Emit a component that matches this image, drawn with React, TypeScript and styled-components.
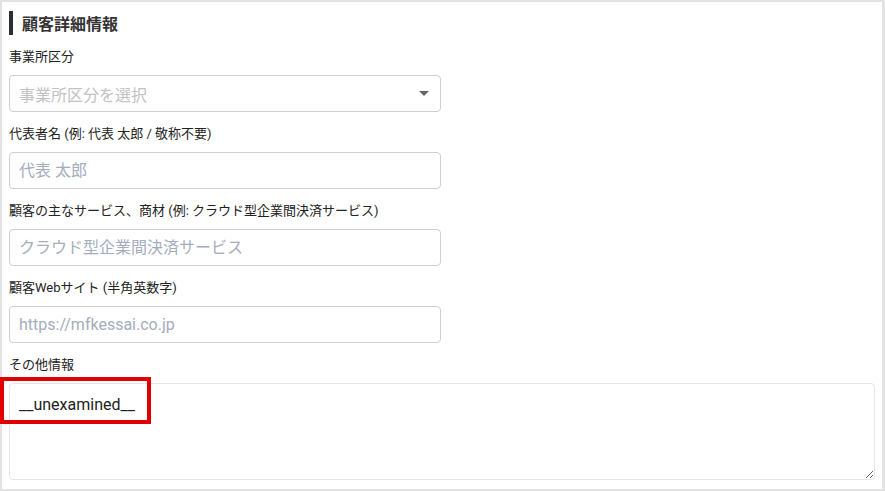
import React from 'react';
import styled, { createGlobalStyle } from 'styled-components';

const GlobalStyle = createGlobalStyle`
  html, body {
    margin: 0;
    padding: 0;
    background: #ffffff;
  }
  * {
    box-sizing: border-box;
  }
`;

const Card = styled.section`
  width: 885px;
  height: 491px;
  border: 2px solid #e3e3e3;
  border-right-width: 3px;
  background: #ffffff;
  padding: 9px 7px 9px 7px;
  display: flex;
  flex-direction: column;
  font-family: Roboto, 'Noto Sans CJK JP', sans-serif;
  color: #222;
`;

const Title = styled.h2`
  margin: 0 0 13px;
  height: 24px;
  display: flex;
  align-items: center;
  gap: 9px;
  font-size: 16px;
  font-weight: 700;
  color: #333;
  &::before {
    content: '';
    display: block;
    width: 4px;
    height: 24px;
    background: #2b3036;
  }
`;

const Field = styled.div`
  display: flex;
  flex-direction: column;
  margin-bottom: 13px;
  &:last-child {
    margin-bottom: 0;
    flex: 1;
  }
`;

const Label = styled.label`
  font-size: 13px;
  line-height: 18px;
  height: 18px;
  margin-bottom: 9px;
  color: #222;
`;

const TextInput = styled.input`
  width: 432px;
  height: 37px;
  border: 1px solid #cfcfcf;
  border-radius: 4px;
  padding: 0 9px;
  font-family: Roboto, 'Noto Sans CJK JP', sans-serif;
  font-size: 16px;
  color: #222;
  outline: none;
  &::placeholder {
    color: #a3adbd;
  }
`;

const SelectBox = styled.div`
  position: relative;
  width: 432px;
  height: 37px;
  border: 1px solid #cfcfcf;
  border-radius: 4px;
  padding: 0 9px;
  display: flex;
  align-items: center;
  justify-content: space-between;
  font-size: 16px;
  color: #c2c2c2;
`;

const Caret = styled.span`
  width: 0;
  height: 0;
  margin-right: 2px;
  border-left: 5px solid transparent;
  border-right: 5px solid transparent;
  border-top: 5px solid #666;
`;

const NoteWrap = styled.div`
  position: relative;
  flex: 1;
  display: flex;
`;

const TextArea = styled.textarea`
  flex: 1;
  width: 100%;
  border: 1px solid #e6e6e6;
  border-radius: 4px;
  padding: 10px 9px;
  font-family: Roboto, 'Noto Sans CJK JP', sans-serif;
  font-size: 16px;
  line-height: 22px;
  color: #222;
  outline: none;
  resize: vertical;
`;

const Highlight = styled.div`
  position: absolute;
  left: -9px;
  top: -6px;
  width: 151px;
  height: 47px;
  border: 4px solid #e00000;
  pointer-events: none;
`;

export default function App() {
  return (
    <>
      <GlobalStyle />
      <Card>
        <Title>顧客詳細情報</Title>
        <Field>
          <Label>事業所区分</Label>
          <SelectBox>
            <span>事業所区分を選択</span>
            <Caret />
          </SelectBox>
        </Field>
        <Field>
          <Label>代表者名 (例: 代表 太郎 / 敬称不要)</Label>
          <TextInput placeholder="代表 太郎" />
        </Field>
        <Field>
          <Label>顧客の主なサービス、商材 (例: クラウド型企業間決済サービス)</Label>
          <TextInput placeholder="クラウド型企業間決済サービス" />
        </Field>
        <Field>
          <Label>顧客Webサイト (半角英数字)</Label>
          <TextInput placeholder="https://mfkessai.co.jp" />
        </Field>
        <Field>
          <Label>その他情報</Label>
          <NoteWrap>
            <TextArea defaultValue="__unexamined__" />
            <Highlight />
          </NoteWrap>
        </Field>
      </Card>
    </>
  );
}
